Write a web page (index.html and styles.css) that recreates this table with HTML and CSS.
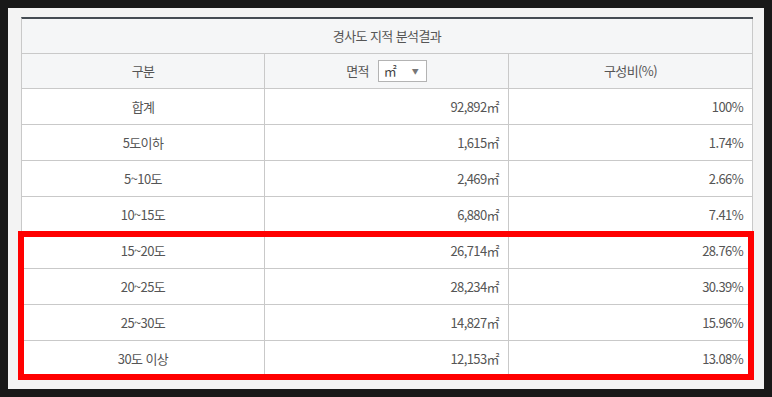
FILE: index.html
```html
<!DOCTYPE html>
<html lang="ko">
<head>
<meta charset="utf-8">
<title>경사도 지적 분석결과</title>
<link rel="stylesheet" href="styles.css">
</head>
<body>
<div class="panel">
  <table class="result">
    <colgroup>
      <col class="c1"><col class="c2"><col class="c3">
    </colgroup>
    <thead>
      <tr class="title-row"><th colspan="3">경사도 지적 분석결과</th></tr>
      <tr class="head-row">
        <th>구분</th>
        <th><div class="area-head"><span class="area-label">면적</span><span class="unit-select"><span class="unit">㎡</span><span class="arrow">▼</span></span></div></th>
        <th>구성비(%)</th>
      </tr>
    </thead>
    <tbody>
      <tr><td>합계</td><td class="num">92,892㎡</td><td class="num">100%</td></tr>
      <tr><td>5도이하</td><td class="num">1,615㎡</td><td class="num">1.74%</td></tr>
      <tr><td>5~10도</td><td class="num">2,469㎡</td><td class="num">2.66%</td></tr>
      <tr><td>10~15도</td><td class="num">6,880㎡</td><td class="num">7.41%</td></tr>
      <tr><td>15~20도</td><td class="num">26,714㎡</td><td class="num">28.76%</td></tr>
      <tr><td>20~25도</td><td class="num">28,234㎡</td><td class="num">30.39%</td></tr>
      <tr><td>25~30도</td><td class="num">14,827㎡</td><td class="num">15.96%</td></tr>
      <tr><td>30도 이상</td><td class="num">12,153㎡</td><td class="num">13.08%</td></tr>
    </tbody>
  </table>
  <div class="highlight"></div>
</div>
</body>
</html>
```
FILE: styles.css
```css
html, body {
  margin: 0;
  padding: 0;
}
body {
  background: #191919;
  padding: 8px;
  font-family: "Noto Sans CJK KR", "Noto Sans", sans-serif;
}
.panel {
  position: relative;
  background: #f3f3f3;
  width: 756px;
  height: 381px;
  box-sizing: border-box;
  padding: 9px 11px 0 13px;
}
.result {
  table-layout: fixed;
  width: 732px;
  border-collapse: separate;
  border-spacing: 0;
  border-top: 2px solid #454c53;
  border-left: 1px solid #c9c9c9;
  font-size: 13px;
  color: #555;
  letter-spacing: -0.6px;
}
.c1 { width: 243px; }
.c2 { width: 244px; }
.c3 { width: 244px; }
.result th, .result td {
  padding: 0;
  border-right: 1px solid #c9c9c9;
  border-bottom: 1px solid #c9c9c9;
  font-weight: normal;
  text-align: center;
  white-space: nowrap;
}
.result th {
  background: #f5f6f7;
  line-height: 34px;
  height: 34px;
}
.result td {
  background: #fff;
  line-height: 35px;
  height: 35px;
}
.result td.num {
  text-align: right;
  padding-right: 9px;
}
.area-head {
  display: flex;
  align-items: center;
  justify-content: center;
  gap: 9px;
  height: 34px;
}
.unit-select {
  display: flex;
  align-items: center;
  justify-content: space-between;
  box-sizing: border-box;
  width: 49px;
  height: 22px;
  padding: 0 7px 0 5px;
  background: #fff;
  border: 1px solid #b3b3b3;
  line-height: 20px;
  letter-spacing: 0;
}
.unit {
  font-size: 13px;
  color: #444;
}
.arrow {
  font-size: 7px;
  color: #777;
}
.highlight {
  position: absolute;
  left: 10px;
  top: 223px;
  width: 736px;
  height: 149px;
  box-sizing: border-box;
  border: 6px solid #ff0000;
}
```
